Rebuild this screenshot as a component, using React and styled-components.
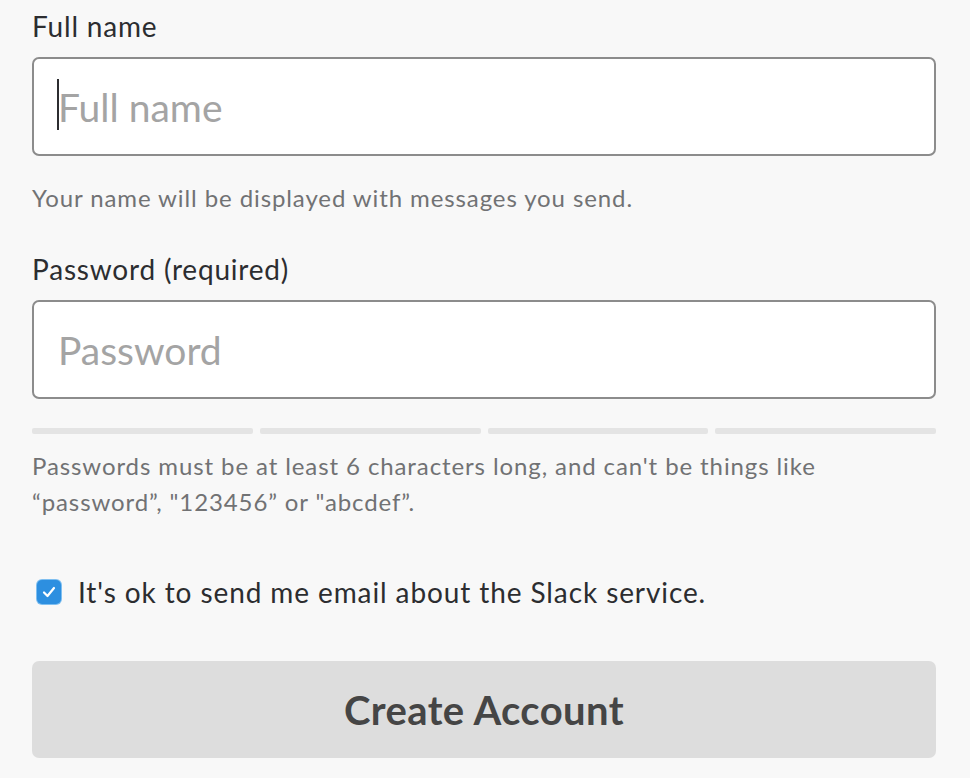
import styled, { createGlobalStyle } from "styled-components";

const GlobalStyle = createGlobalStyle`
  html, body {
    margin: 0;
    padding: 0;
    background: #f8f8f8;
    font-family: Lato, "Open Sans", sans-serif;
  }
`;

const Form = styled.form`
  width: 904px;
  padding: 9px 0 0 32px;
  display: flex;
  flex-direction: column;
`;

const Label = styled.label`
  font-size: 28px;
  line-height: 34px;
  letter-spacing: 0.8px;
  color: #2c2d30;
  margin-bottom: 14px;
`;

const Field = styled.div`
  position: relative;
`;

const Input = styled.input`
  box-sizing: border-box;
  width: 100%;
  height: 99px;
  padding: 0 24px;
  border: 2px solid #8c8c8c;
  border-radius: 7px;
  background: #ffffff;
  font-family: inherit;
  font-size: 39px;
  color: #2c2d30;
  outline: none;
  caret-color: #2c2d30;

  &::placeholder {
    color: #a4a4a4;
  }
`;

const Caret = styled.span`
  position: absolute;
  left: 25px;
  top: 22px;
  width: 2px;
  height: 51px;
  background: #2c2d30;
  pointer-events: none;
`;

const Hint = styled.p`
  margin: ${(p) => p.$top}px 0 0;
  font-size: 24px;
  line-height: 36px;
  letter-spacing: 0.9px;
  color: #717274;
`;

const Meter = styled.div`
  display: grid;
  grid-template-columns: repeat(4, 1fr);
  gap: 7px;
  margin-top: 29px;
`;

const Segment = styled.div`
  height: 6px;
  border-radius: 2px;
  background: #e4e4e4;
`;

const CheckRow = styled.label`
  display: flex;
  align-items: center;
  gap: 17px;
  margin: 55px 0 0 5px;
  font-size: 28px;
  letter-spacing: 0.9px;
  color: #2c2d30;
`;

const Box = styled.span`
  flex: none;
  width: 24px;
  height: 24px;
  border-radius: 5px;
  background: #2d8fe0;
  box-shadow: 0 0 0 1px #7fbff0;
  display: flex;
  align-items: center;
  justify-content: center;
`;

const Button = styled.button`
  margin-top: 52px;
  height: 97px;
  border: none;
  border-radius: 7px;
  background: #dddddd;
  font-family: inherit;
  font-size: 40px;
  font-weight: 700;
  letter-spacing: 0.4px;
  color: #454545;
`;

const Spacer = styled.div`
  height: ${(p) => p.$h}px;
`;

export default function App() {
  return (
    <>
      <GlobalStyle />
      <Form onSubmit={(e) => e.preventDefault()}>
        <Label>Full name</Label>
        <Field>
          <Input placeholder="Full name" />
          <Caret />
        </Field>
        <Hint $top={24}>Your name will be displayed with messages you send.</Hint>
        <Spacer $h={36} />
        <Label>Password (required)</Label>
        <Input type="password" placeholder="Password" />
        <Meter>
          <Segment />
          <Segment />
          <Segment />
          <Segment />
        </Meter>
        <Hint $top={14}>
          Passwords must be at least 6 characters long, and can't be things like
          <br />
          “password”, "123456” or "abcdef”.
        </Hint>
        <CheckRow>
          <Box>
            <svg width="14" height="12" viewBox="0 0 14 12">
              <path
                d="M2 6.5 L5.5 10 L12 2"
                fill="none"
                stroke="#ffffff"
                strokeWidth="2.2"
                strokeLinecap="round"
                strokeLinejoin="round"
              />
            </svg>
          </Box>
          It's ok to send me email about the Slack service.
        </CheckRow>
        <Button type="submit">Create Account</Button>
      </Form>
    </>
  );
}
